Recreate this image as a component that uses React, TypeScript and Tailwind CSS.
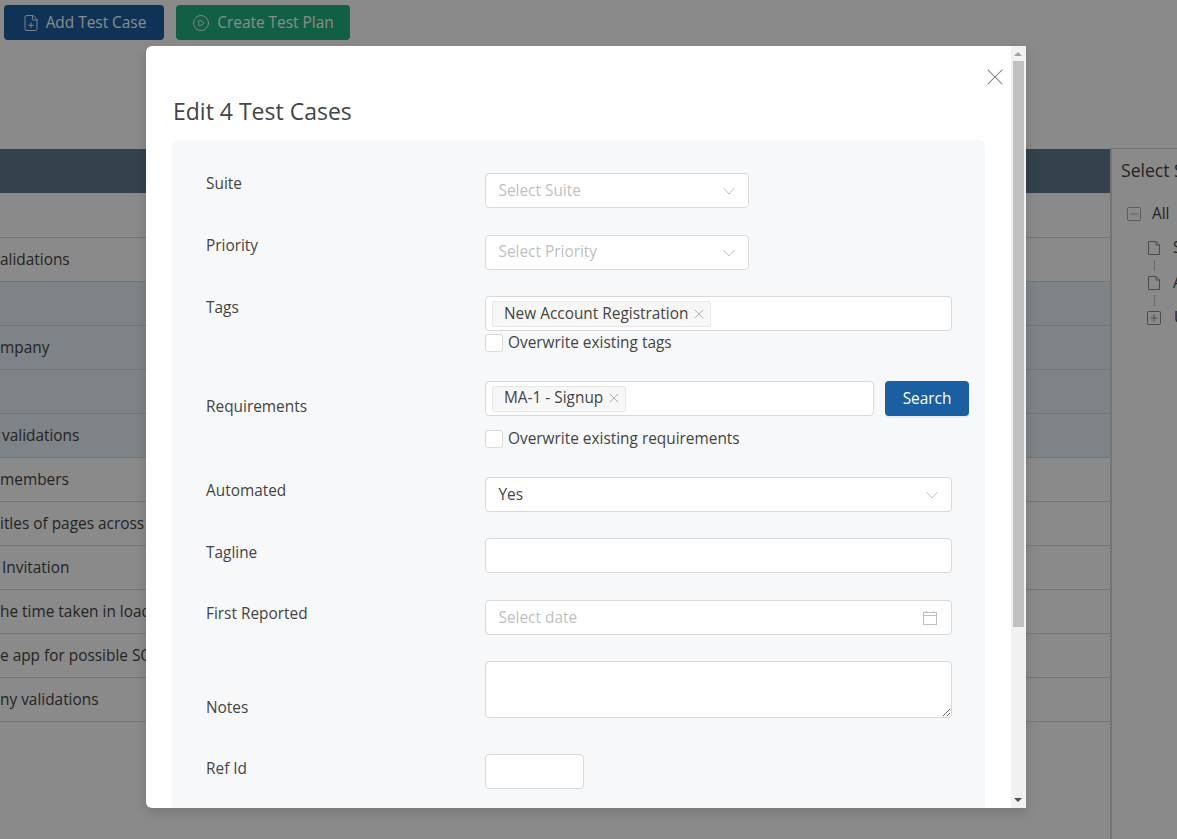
import { ReactNode } from "react";
import { FilePlus, CirclePlay, X } from "lucide-react";

const rows = [
  { text: "alidations", selected: false, pad: "pl-0" },
  { text: "", selected: true, pad: "pl-0" },
  { text: "mpany", selected: true, pad: "pl-0" },
  { text: "", selected: true, pad: "pl-0" },
  { text: "validations", selected: true, pad: "pl-[2px]" },
  { text: "members", selected: false, pad: "pl-0" },
  { text: "itles of pages across", selected: false, pad: "pl-0" },
  { text: "Invitation", selected: false, pad: "pl-[2px]" },
  { text: "he time taken in loading", selected: false, pad: "pl-0" },
  { text: "e app for possible SQL", selected: false, pad: "pl-0" },
  { text: "ny validations", selected: false, pad: "pl-0" },
];

function Chevron() {
  return (
    <svg width="12" height="8" viewBox="0 0 12 8" fill="none" stroke="#bfbfbf" strokeWidth="1" className="shrink-0">
      <path d="M0.5 1 L6 7 L11.5 1" />
    </svg>
  );
}

function FileIcon() {
  return (
    <svg width="14" height="16" viewBox="0 0 14 16" fill="none" stroke="#8c8c8c" strokeWidth="1" className="shrink-0">
      <path d="M1.5 1.5 H9 L12.5 5 V14.5 H1.5 Z M9 1.5 V5 H12.5" />
    </svg>
  );
}

function BoxIcon({ plus, size, stroke }: { plus?: boolean; size: number; stroke: string }) {
  return (
    <svg width={size} height={size} viewBox="0 0 14 14" fill="none" stroke={stroke} strokeWidth="1" className="shrink-0">
      <rect x="0.5" y="0.5" width="13" height="13" rx="1" />
      <path d="M3.5 7 H10.5" />
      {plus && <path d="M7 3.5 V10.5" />}
    </svg>
  );
}

function SelectBox({ value, placeholder, width, textClass = "" }: { value?: string; placeholder?: string; width: string; textClass?: string }) {
  return (
    <div className={`${width} h-[35px] flex items-center justify-between pl-[12.5px] pr-[13px] bg-white border border-[#d9d9d9] rounded-[4px]`}>
      <span className={`${textClass} ${value ? "text-[#444]" : "text-[#bfbfbf]"}`}>{value ?? placeholder}</span>
      <Chevron />
    </div>
  );
}

function Tag({ label, className = "" }: { label: string; className?: string }) {
  return (
    <span className={`h-[26px] flex items-center gap-[3px] pl-[11px] pr-[3px] bg-[#f7f7f7] border border-[#e8e8e8] rounded-[2px] text-[#444] ${className}`}>
      {label}
      <X size={16} strokeWidth={1} className="text-[#8c8c8c]" />
    </span>
  );
}

function Check({ label }: { label: string }) {
  return (
    <label className="flex items-center gap-[5px] text-[#444]">
      <span className="w-[18px] h-[18px] bg-white border border-[#d9d9d9] rounded-[3px]" />
      <span>{label}</span>
    </label>
  );
}

function Row({ label, labelClass, className, children }: { label: string; labelClass: string; className: string; children: ReactNode }) {
  return (
    <div className={`flex ${className}`}>
      <div className={`w-[279px] shrink-0 text-[#444] ${labelClass}`}>{label}</div>
      {children}
    </div>
  );
}

export default function App() {
  return (
    <div className="relative h-screen overflow-hidden bg-white text-[15.4px] leading-[22px] font-['Open_Sans',sans-serif]">
      {/* page behind the dialog */}
      <div className="flex gap-3 pl-1 pt-[5px] h-[149px]">
        <button className="h-[35px] w-[160px] flex items-center justify-center gap-[6px] bg-[#1a5fa2] text-white rounded-[4px]">
          <FilePlus size={18} strokeWidth={1.2} />
          <span>Add Test Case</span>
        </button>
        <button className="h-[35px] w-[174px] flex items-center justify-center gap-[7px] bg-[#21b07e] text-white rounded-[4px]">
          <CirclePlay size={18} strokeWidth={1.2} />
          <span>Create Test Plan</span>
        </button>
      </div>
      <div className="flex">
        <div className="w-[1110px] shrink-0">
          <div className="h-11 bg-[#5f7b8c]" />
          <div className="h-[45px] border-b border-[#d8d8d8]" />
          {rows.map((row, i) => (
            <div
              key={i}
              className={`h-11 flex items-center border-b border-[#d8d8d8] text-[#444] whitespace-nowrap ${row.pad} ${row.selected ? "bg-[#e8f2f7]" : "bg-white"}`}
            >
              <span>{row.text}</span>
            </div>
          ))}
        </div>
        <div className="flex-1 h-[700px] -mt-[1px] border-l-2 border-t border-[#d8d8d8] overflow-hidden whitespace-nowrap text-[#444]">
          <div className="pl-[9px] pt-[9px] text-[17.6px] leading-[24px]">Select Suite</div>
          <div className="pl-[15px] pt-[20px] flex flex-col">
            <div className="flex items-center gap-[11px] h-[24px]">
              <BoxIcon size={14} stroke="#a8a8a8" />
              All
            </div>
            <div className="h-[10px]" />
            <div className="flex items-center gap-[12px] h-[24px] pl-[20px]">
              <FileIcon />
              Signup
            </div>
            <div className="h-[11px] w-px ml-[27px] bg-[#c4c4c4]" />
            <div className="flex items-center gap-[12px] h-[24px] pl-[20px]">
              <FileIcon />
              Account
            </div>
            <div className="h-[11px] w-px ml-[27px] bg-[#c4c4c4]" />
            <div className="flex items-center gap-[13px] h-[24px] pl-[20px]">
              <BoxIcon plus size={14} stroke="#8c8c8c" />
              Users
            </div>
          </div>
        </div>
      </div>

      {/* dialog */}
      <div className="absolute inset-0 bg-[rgba(0,0,0,0.46)] pl-[146px] pt-[46px]">
        <div className="relative w-[880px] h-[762px] overflow-hidden bg-white rounded-l-[6px] shadow-[0_4px_12px_rgba(0,0,0,0.15)]">
          <X size={28} strokeWidth={0.9} className="absolute right-[17px] top-[17px] text-[#777]" />

          {/* scrollbar */}
          <div className="absolute right-0 top-0 bottom-0 w-[15px] bg-[#f1f1f1]">
            <div className="absolute left-[3px] top-[6px] w-0 h-0 border-x-[4px] border-x-transparent border-b-[4px] border-b-[#a3a3a3]" />
            <div className="absolute left-[2px] top-[15px] w-[11px] h-[566px] bg-[#c1c1c1]" />
            <div className="absolute left-[3px] bottom-[6px] w-0 h-0 border-x-[4px] border-x-transparent border-t-[4px] border-t-[#505050]" />
          </div>

          <div className="h-[94px] pl-[27px] pt-[50px] text-[23px] leading-[30px] text-[#444]">Edit 4 Test Cases</div>
          <div className="ml-[26px] w-[813px] h-[891px] bg-[#f7f8fa] rounded-[6px] pl-[34px] pt-[33px]">
            <Row label="Suite" labelClass="pt-0" className="mb-[27px]">
              <SelectBox placeholder="Select Suite" width="w-[264px]" />
            </Row>
            <Row label="Priority" labelClass="pt-0" className="mb-[26px]">
              <SelectBox placeholder="Select Priority" width="w-[264px]" textClass="-mt-[1px]" />
            </Row>
            <Row label="Tags" labelClass="pt-[1px]" className="mb-[27px]">
              <div>
                <div className="w-[467px] h-[35px] flex items-center pl-[6px] bg-white border border-[#d9d9d9] rounded-[4px]">
                  <Tag label="New Account Registration" />
                </div>
                <div className="mt-[1px]">
                  <Check label="Overwrite existing tags" />
                </div>
              </div>
            </Row>
            <Row label="Requirements" labelClass="pt-[15px]" className="mb-[27px]">
              <div>
                <div className="flex gap-[11px]">
                  <div className="w-[389px] h-[35px] flex items-center pl-[6px] bg-white border border-[#d9d9d9] rounded-[4px]">
                    <Tag label="MA-1 - Signup" className="pb-[1px]" />
                  </div>
                  <button className="w-[84px] h-[35px] bg-[#1a5fa2] text-white rounded-[4px] shadow-[0_2px_0_rgba(0,0,0,0.05)]">Search</button>
                </div>
                <div className="mt-[12px]">
                  <Check label="Overwrite existing requirements" />
                </div>
              </div>
            </Row>
            <Row label="Automated" labelClass="pt-[3px]" className="mb-[26px]">
              <SelectBox value="Yes" width="w-[467px]" />
            </Row>
            <Row label="Tagline" labelClass="pt-[4px]" className="mb-[27px]">
              <input className="w-[467px] h-[35px] bg-white border border-[#d9d9d9] rounded-[4px] px-[13px] outline-none" />
            </Row>
            <Row label="First Reported" labelClass="pt-[3px]" className="mb-[26px]">
              <div className="w-[467px] h-[35px] flex items-center justify-between pl-[12.5px] pr-[14px] bg-white border border-[#d9d9d9] rounded-[4px]">
                <span className="text-[#bfbfbf]">Select date</span>
                <svg width="14" height="14" viewBox="0 0 14 14" fill="none" stroke="#bfbfbf" strokeWidth="1" className="shrink-0">
                  <rect x="0.5" y="1.5" width="13" height="12" />
                  <path d="M0.5 4.5 H13.5 M3.5 0 V1.5 M10.5 0 V1.5" />
                </svg>
              </div>
            </Row>
            <Row label="Notes" labelClass="self-end -mb-[1px]" className="mb-[36px]">
              <textarea className="block w-[467px] h-[57px] bg-white border border-[#d9d9d9] rounded-[4px] outline-none" />
            </Row>
            <Row label="Ref Id" labelClass="pt-[4px]" className="">
              <input className="w-[99px] h-[35px] bg-white border border-[#d9d9d9] rounded-[4px] px-[13px] outline-none" />
            </Row>
          </div>
        </div>
      </div>
    </div>
  );
}
